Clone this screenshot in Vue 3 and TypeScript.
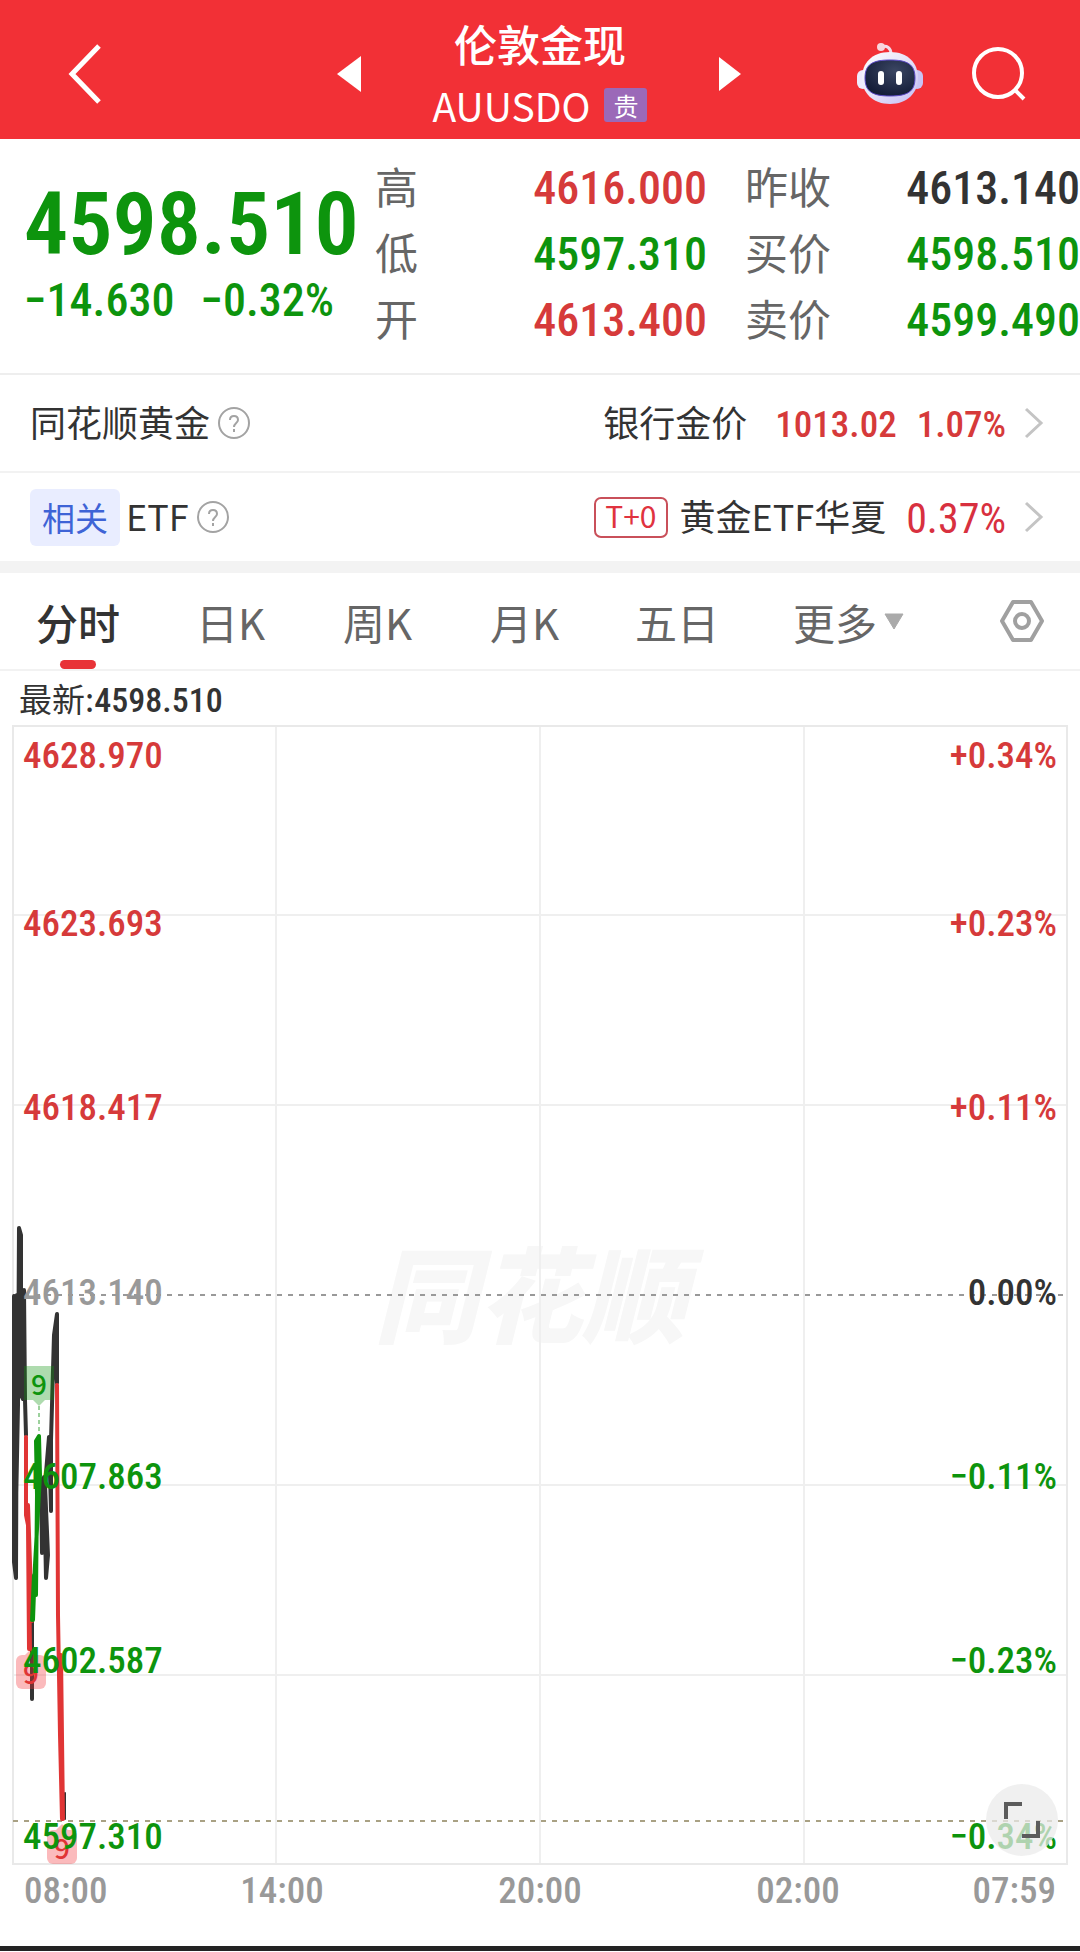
<script setup lang="ts">
type Tone = 'up' | 'down' | 'flat' | 'muted'

interface Quote {
  label: string
  value: string
  tone: Tone
}

interface AxisMark {
  price: string
  change: string
  priceTone: Tone
  changeTone: Tone
  y: number
}

interface Marker {
  kind: 'buy' | 'sell'
  x: number
  y: number
}

const quoteColumns: Quote[][] = [
  [
    { label: '高', value: '4616.000', tone: 'up' },
    { label: '低', value: '4597.310', tone: 'down' },
    { label: '开', value: '4613.400', tone: 'up' },
  ],
  [
    { label: '昨收', value: '4613.140', tone: 'flat' },
    { label: '买价', value: '4598.510', tone: 'down' },
    { label: '卖价', value: '4599.490', tone: 'down' },
  ],
]

const tabs: string[] = ['分时', '日K', '周K', '月K', '五日']

const axis: AxisMark[] = [
  { price: '4628.970', change: '+0.34%', priceTone: 'up', changeTone: 'up', y: 31 },
  { price: '4623.693', change: '+0.23%', priceTone: 'up', changeTone: 'up', y: 199 },
  { price: '4618.417', change: '+0.11%', priceTone: 'up', changeTone: 'up', y: 383 },
  { price: '4613.140', change: '0.00%', priceTone: 'muted', changeTone: 'flat', y: 568 },
  { price: '4607.863', change: '−0.11%', priceTone: 'down', changeTone: 'down', y: 752 },
  { price: '4602.587', change: '−0.23%', priceTone: 'down', changeTone: 'down', y: 936 },
  { price: '4597.310', change: '−0.34%', priceTone: 'down', changeTone: 'down', y: 1112 },
]

const markers: Marker[] = [
  { kind: 'buy', x: 27, y: 641 },
  { kind: 'sell', x: 19, y: 930 },
  { kind: 'sell', x: 50, y: 1105 },
]

const hours: string[] = ['08:00', '14:00', '20:00', '02:00', '07:59']
</script>

<template>
  <div class="page">
    <header class="bar">
      <div class="bar-side bar-left">
        <button class="plain" type="button" aria-label="返回">
          <svg width="34" height="60" viewBox="0 0 34 60"><path d="M31 2 4 30l27 28" fill="none" stroke="#fff" stroke-width="5" /></svg>
        </button>
        <button class="plain" type="button" aria-label="上一个">
          <svg width="24" height="36" viewBox="0 0 24 36"><path d="M24 0v36L0 18z" fill="#fff" /></svg>
        </button>
      </div>
      <div class="bar-title">
        <h1>伦敦金现</h1>
        <p><span>AUUSDO</span><span class="badge">贵</span></p>
      </div>
      <div class="bar-side bar-right">
        <button class="plain" type="button" aria-label="下一个">
          <svg width="22" height="34" viewBox="0 0 22 34"><path d="M0 0v34l22-17z" fill="#fff" /></svg>
        </button>
        <div class="tools">
          <button class="plain" type="button" aria-label="智能助手">
            <svg width="66" height="62" viewBox="0 0 66 62">
              <defs>
                <linearGradient id="shell" x1="0" y1="0" x2="1" y2="1">
                  <stop offset="0" stop-color="#ffffff" />
                  <stop offset=".5" stop-color="#e6e2f8" />
                  <stop offset="1" stop-color="#c3bcf5" />
                </linearGradient>
                <radialGradient id="visor" cx=".6" cy=".3" r=".7">
                  <stop offset="0" stop-color="#3b4663" />
                  <stop offset="1" stop-color="#141d38" />
                </radialGradient>
              </defs>
              <path d="M24 4c6-2 10 1 10 7" fill="none" stroke="#f3dcea" stroke-width="3" />
              <circle cx="24" cy="4" r="4" fill="#f9d5dc" />
              <rect x="0" y="27" width="12" height="19" rx="6" fill="#efeafc" />
              <rect x="54" y="27" width="12" height="19" rx="6" fill="#c9c3f4" />
              <path d="M33 9c18 0 28 11 28 26S50 61 33 61 5 50 5 35 15 9 33 9z" fill="url(#shell)" />
              <path d="M33 17c17 0 25 4 25 18s-8 18-25 18S8 49 8 35s8-18 25-18z" fill="url(#visor)" stroke="#5a48c8" stroke-width="1" />
              <rect x="21" y="28" width="6" height="14" rx="3" fill="#fff" />
              <rect x="39" y="28" width="6" height="14" rx="3" fill="#fff" />
            </svg>
          </button>
          <button class="plain" type="button" aria-label="搜索">
            <svg width="54" height="54" viewBox="0 0 54 54"><circle cx="26" cy="26" r="24" fill="none" stroke="#fff" stroke-width="4" /><path d="m42 42 10 10" stroke="#fff" stroke-width="4" /></svg>
          </button>
        </div>
      </div>
    </header>

    <main>
      <section class="quote">
        <div class="last down">
          <strong class="num">4598.510</strong>
          <p class="num"><span>−14.630</span><span>−0.32%</span></p>
        </div>
        <dl v-for="(column, i) in quoteColumns" :key="i" class="quote-col">
          <div v-for="item in column" :key="item.label" class="quote-row">
            <dt>{{ item.label }}</dt>
            <dd class="num" :class="item.tone">{{ item.value }}</dd>
          </div>
        </dl>
      </section>

      <section class="link-row">
        <div class="link-name">
          <span class="word">同花顺黄金</span>
          <svg class="help" width="32" height="32" viewBox="0 0 32 32"><circle cx="16" cy="16" r="15" /><path d="M12 13c0-3 2-4 4-4s4 1 4 4c0 3-4 3-4 7M16 22v3" /></svg>
        </div>
        <a class="link-target" href="#gold">
          <span class="word">银行金价</span>
          <span class="num up price">1013.02</span>
          <span class="num up pct">1.07%</span>
          <svg class="more" width="20" height="32" viewBox="0 0 20 32"><path d="m2 2 15 14L2 30" /></svg>
        </a>
      </section>
      <section class="link-row related">
        <div class="link-name">
          <span class="tag">相关</span>
          <span class="word">ETF</span>
          <svg class="help" width="32" height="32" viewBox="0 0 32 32"><circle cx="16" cy="16" r="15" /><path d="M12 13c0-3 2-4 4-4s4 1 4 4c0 3-4 3-4 7M16 22v3" /></svg>
        </div>
        <a class="link-target" href="#etf">
          <span class="t0">T+0</span>
          <span class="word">黄金ETF华夏</span>
          <span class="num thin pct">0.37%</span>
          <svg class="more" width="20" height="32" viewBox="0 0 20 32"><path d="m2 2 15 14L2 30" /></svg>
        </a>
      </section>

      <nav class="tabs">
        <button v-for="(tab, i) in tabs" :key="tab" type="button" class="plain tab" :class="{ active: i === 0 }">{{ tab }}</button>
        <button type="button" class="plain tab">更多<svg width="20" height="17" viewBox="0 0 20 17"><path d="M1 1h18l-9 15z" fill="#aaa" stroke="#aaa" stroke-linejoin="round" /></svg></button>
        <button type="button" class="plain gear" aria-label="设置">
          <svg width="44" height="42" viewBox="0 0 44 42" fill="none" stroke="#a0a0a0" stroke-width="4"><path d="M13 2h18l11 19-11 19H13L2 21z" stroke-linejoin="round" /><circle cx="22" cy="21" r="7" /></svg>
        </button>
      </nav>

      <section class="chart">
        <p class="latest">最新:<span class="num">4598.510</span></p>
        <div class="plot">
          <span class="watermark">同花顺</span>
          <svg class="lines" viewBox="0 0 1056 1140" preserveAspectRatio="none" fill="none">
            <path d="M1 190H1055M1 380H1055M1 760H1055M1 950H1055M264 0V1140M528 0V1140M792 0V1140" stroke="#efefef" stroke-width="2" />
            <rect x="1" y="1" width="1054" height="1138" stroke="#e9e9e9" stroke-width="2" />
            <path d="M1 570H1055" stroke="#999" stroke-width="2" stroke-dasharray="5 6" />
            <path d="M1 1096H1055" stroke="#a9a184" stroke-width="2" stroke-dasharray="5 6" />
            <g stroke-width="4" stroke-linejoin="round" stroke-linecap="round">
              <path d="M2 571V837L4 853 5 570 3 835 6 680 7 503 9 510 9 670 11 674 12 565 13 675 10 570 14 710" stroke="#333" />
              <path d="M20 896V974" stroke="#333" />
              <path d="M29 754 30 828 32 752 34 853 36 830 33 760 37 712 39 786 39 715 42 610 45 589 45 658 42 612" stroke="#333" />
              <path d="M53 1068V1094" stroke="#333" stroke-width="2" />
              <path d="M14 712V790L16 800 17 924 18 924 16 780 20 896" stroke="#e03535" />
              <path d="M45 660 46 890 48 1010 50 1094 49 930 51 1094" stroke="#e03535" />
              <path d="M20 895 22 850 24 870 25 770 24 716 27 711 28 750 23 840 21 895" stroke="#0d940d" />
              <path d="M27 681V710" stroke="#3aa33a" stroke-width="1" stroke-dasharray="4 3" stroke-linecap="butt" />
            </g>
          </svg>
          <span v-for="(m, i) in markers" :key="i" class="marker" :class="m.kind" :style="{ left: m.x + 'px', top: m.y + 'px' }">9</span>
          <div v-for="mark in axis" :key="mark.price" class="axis num" :style="{ top: mark.y + 'px' }">
            <span :class="mark.priceTone">{{ mark.price }}</span>
            <span :class="mark.changeTone">{{ mark.change }}</span>
          </div>
          <button type="button" class="expand" aria-label="全屏">
            <svg width="36" height="36" viewBox="0 0 36 36"><path d="M2 17V2h16M34 19v15H18" fill="none" stroke="#5c5c5c" stroke-width="4" /></svg>
          </button>
        </div>
        <div class="hours num">
          <span v-for="h in hours" :key="h">{{ h }}</span>
        </div>
      </section>
    </main>
    <div class="foot"></div>
  </div>
</template>

<style>
body {
  margin: 0;
  background: #fff;
}
</style>

<style scoped>
.page {
  font-family: 'Noto Sans CJK SC', sans-serif;
  color: #333;
  background: #fff;
  overflow: hidden;
}
.num {
  font-family: 'Roboto Condensed', 'Noto Sans CJK SC', sans-serif;
  font-weight: 500;
}
.up { color: #d63a3a; }
.down { color: #0d940d; }
.flat { color: #333; }
.muted { color: #999; }
p, h1, dl, dd { margin: 0; }
svg { display: block; flex: none; }
.plain {
  padding: 0;
  border: 0;
  background: none;
  color: inherit;
  font: inherit;
}

.bar {
  display: grid;
  grid-template-columns: 1fr 358px 1fr;
  align-items: center;
  padding: 12px 0 5px;
  background: #f23036;
  color: #fff;
}
.bar-side {
  display: flex;
  align-items: center;
  justify-content: space-between;
  padding-top: 2px;
}
.bar-left { padding-left: 68px; }
.bar-right { padding-right: 54px; }
.tools {
  display: flex;
  align-items: center;
  gap: 49px;
}
.bar-title h1 {
  font-size: 43px;
  font-weight: 500;
  line-height: 62px;
  text-align: center;
}
.bar-title p {
  display: flex;
  align-items: center;
  justify-content: center;
  gap: 14px;
  padding-top: 2px;
  font-size: 39px;
  line-height: 58px;
}
.badge {
  width: 43px;
  background: #9b69b8;
  border-radius: 3px;
  font-size: 25px;
  line-height: 34px;
  text-align: center;
}

.quote {
  display: grid;
  grid-template-columns: 375fr 332fr 373fr;
  padding: 13px 0 23px;
  border-bottom: 2px solid #eee;
  white-space: nowrap;
}
.last { padding: 26px 0 0 24px; }
.last strong {
  display: block;
  font-size: 88px;
  font-weight: 600;
  line-height: 92px;
}
.last p {
  display: flex;
  gap: 26px;
  font-size: 46px;
  line-height: 60px;
}
.quote-col + .quote-col { padding-left: 38px; }
.quote-row {
  display: flex;
  align-items: baseline;
  justify-content: space-between;
  height: 66px;
  line-height: 66px;
}
dt { font-size: 43px; color: #666; }
dd { font-size: 46px; }

.link-row {
  display: flex;
  align-items: center;
  justify-content: space-between;
  height: 96px;
  padding: 0 36px 0 30px;
  border-bottom: 2px solid #f2f2f2;
  font-size: 36px;
}
.related {
  height: 88px;
  border-bottom: 12px solid #f3f3f3;
}
.link-name, .link-target {
  display: flex;
  align-items: center;
  white-space: nowrap;
}
.word { padding-bottom: 4px; }
.link-target { color: inherit; text-decoration: none; }
.help {
  margin-left: 8px;
  fill: none;
  stroke: #a3a3a3;
  stroke-width: 2;
}
.more {
  margin-left: 18px;
  fill: none;
  stroke: #c4c4c4;
  stroke-width: 3;
}
.link-target .num { padding-top: 2px; font-size: 37px; }
.link-target .thin { font-weight: 400; color: #d8303f; font-size: 42px; }
.price { margin-left: 28px; }
.pct { margin-left: 20px; }
.tag {
  margin-right: 6px;
  padding: 0 12px;
  background: #e9edff;
  border-radius: 6px;
  color: #3e63d6;
  font-size: 33px;
  line-height: 57px;
}
.t0 {
  margin-right: 12px;
  padding: 0 9px 4px;
  border: 2px solid #c9505a;
  border-radius: 7px;
  color: #e0333f;
  font-size: 30px;
  line-height: 33px;
}

.tabs {
  display: flex;
  align-items: center;
  gap: 74px;
  height: 96px;
  padding: 0 36px;
  border-bottom: 2px solid #f2f2f2;
  color: #666;
  font-size: 42px;
}
.tab {
  position: relative;
  display: flex;
  align-items: center;
  justify-content: center;
  gap: 7px;
  min-width: 73px;
  height: 96px;
  white-space: nowrap;
}
.gear { margin-left: auto; }
.active { color: #333; font-weight: 500; }
.active::after {
  content: '';
  position: absolute;
  bottom: 0;
  left: 50%;
  width: 36px;
  height: 9px;
  margin-left: -18px;
  border-radius: 5px;
  background: #e83338;
}

.chart { padding: 0 12px; }
.latest {
  height: 54px;
  padding-left: 7px;
  font-size: 33px;
  line-height: 54px;
}
.latest .num { font-size: 34px; }
.plot {
  position: relative;
  display: flex;
  align-items: center;
  justify-content: center;
  height: 1140px;
}
.watermark {
  margin: 0 20px 12px 0;
  color: #f7f7f7;
  font-size: 104px;
  font-style: italic;
  font-weight: 900;
}
.lines {
  position: absolute;
  inset: 0;
  width: 100%;
  height: 100%;
}
.axis {
  position: absolute;
  left: 11px;
  right: 11px;
  display: flex;
  justify-content: space-between;
  margin-top: -20px;
  font-size: 37px;
  line-height: 40px;
}
.marker {
  position: absolute;
  width: 30px;
  margin-left: -15px;
  font-size: 28px;
  font-weight: 500;
  line-height: 34px;
  text-align: center;
}
.marker::after {
  content: '';
  position: absolute;
  left: 9px;
  border: 6px solid transparent;
}
.buy {
  background: #0d940d55;
  color: #0d940d;
}
.buy::after {
  top: 100%;
  border-top-color: #0d940d55;
  border-bottom: 0;
}
.sell {
  background: #f2303655;
  border-radius: 6px;
  color: #e03535;
}
.sell::after {
  bottom: 100%;
  border-bottom-color: #f2303655;
  border-top: 0;
}
.expand {
  position: absolute;
  right: 10px;
  bottom: 9px;
  display: flex;
  align-items: center;
  justify-content: center;
  width: 72px;
  height: 72px;
  padding: 0;
  border: 0;
  border-radius: 50%;
  background: #ebebebbb;
}
.hours {
  display: grid;
  grid-template-columns: 1fr 2fr 2fr 2fr 1fr;
  padding: 0 12px;
  color: #999;
  font-size: 37px;
  line-height: 52px;
  text-align: center;
}
.hours span:first-child { text-align: left; }
.hours span:last-child { text-align: right; }
.foot {
  height: 5px;
  margin-top: 29px;
  background: #232323;
}
</style>
